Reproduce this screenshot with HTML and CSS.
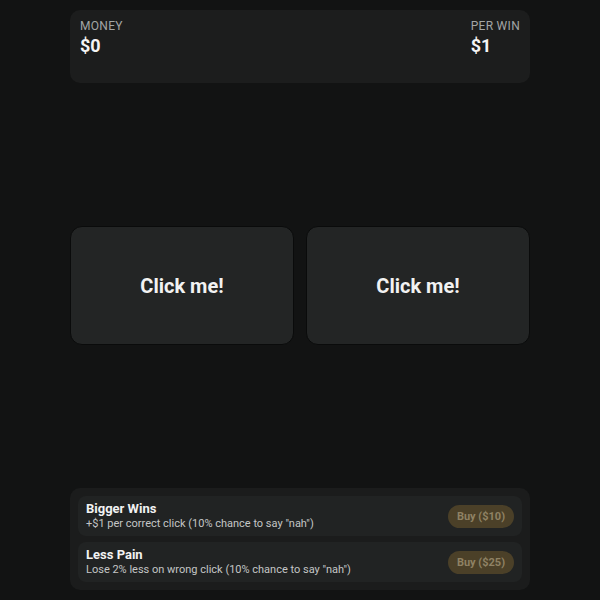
FILE: index.html
```html
<!DOCTYPE html>
<html lang="en">
<head>
    <meta charset="UTF-8">
    <title>Click me!</title>
    <link rel="stylesheet" href="styles.css">
</head>
<body>
    <div class="app">
        <div class="stats">
            <div class="stat">
                <div class="stat-label">MONEY</div>
                <div class="stat-value" id="money">$0</div>
            </div>
            <div class="stat">
                <div class="stat-label">PER WIN</div>
                <div class="stat-value" id="perWin">$1</div>
            </div>
        </div>

        <div class="arena">
            <button class="choice">Click me!</button>
            <button class="choice">Click me!</button>
        </div>

        <div class="shop">
            <div class="upgrade">
                <div class="upgrade-info">
                    <div class="upgrade-name">Bigger Wins</div>
                    <div class="upgrade-desc">+$1 per correct click (10% chance to say "nah")</div>
                </div>
                <button class="buy" disabled>Buy ($10)</button>
            </div>
            <div class="upgrade">
                <div class="upgrade-info">
                    <div class="upgrade-name">Less Pain</div>
                    <div class="upgrade-desc">Lose 2% less on wrong click (10% chance to say "nah")</div>
                </div>
                <button class="buy" disabled>Buy ($25)</button>
            </div>
        </div>
    </div>
</body>
</html>
```

FILE: styles.css
```css
* {
    box-sizing: border-box;
}
body {
    margin: 0;
    background-color: #121313;
    color: #f0f0f0;
    font-family: Roboto, 'Liberation Sans', sans-serif;
}
.app {
    width: 460px;
    height: 100vh;
    margin: 0 auto;
    padding: 10px 0;
    display: flex;
    flex-direction: column;
}
.stats {
    height: 73px;
    padding: 8px 10px;
    background: #1c1d1d;
    border-radius: 10px;
    display: flex;
    justify-content: space-between;
}
.stat-label {
    font-size: 12px;
    letter-spacing: 0.3px;
    color: #a3a5a5;
    line-height: 16px;
}
.stat-value {
    font-size: 18px;
    font-weight: bold;
    line-height: 24px;
    color: #f4f4f4;
}
.arena {
    flex: 1;
    display: flex;
    align-items: center;
    gap: 12px;
}
.choice {
    flex: 1;
    height: 119px;
    background: #232525;
    border: 1px solid #0a0b0b;
    border-radius: 12px;
    color: #f2f2f2;
    font-family: inherit;
    font-size: 20px;
    font-weight: bold;
}
.shop {
    padding: 8px;
    background: #1b1c1c;
    border-radius: 10px;
    display: flex;
    flex-direction: column;
    gap: 6px;
}
.upgrade {
    height: 40px;
    padding: 0 8px;
    background: #212323;
    border-radius: 8px;
    display: flex;
    align-items: center;
    justify-content: space-between;
}
.upgrade-name {
    font-size: 13px;
    font-weight: bold;
    line-height: 16px;
    color: #f2f2f2;
}
.upgrade-desc {
    font-size: 11px;
    line-height: 14px;
    color: #c4c6c6;
}
.buy {
    height: 23px;
    padding: 0 9px;
    border: none;
    border-radius: 12px;
    background: #4b4028;
    color: #8f8264;
    font-family: inherit;
    font-size: 11px;
    font-weight: bold;
}
```
